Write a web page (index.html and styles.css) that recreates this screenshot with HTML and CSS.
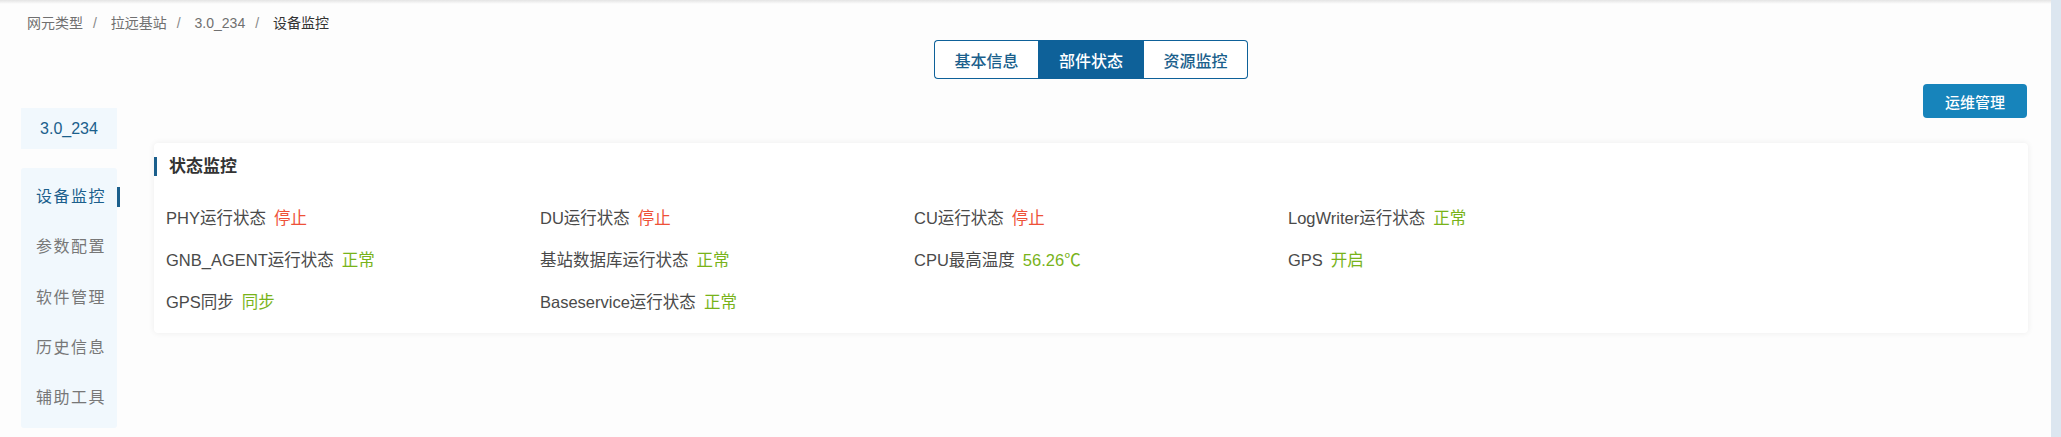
FILE: index.html
```html
<!DOCTYPE html>
<html lang="zh-CN">
<head>
  <meta charset="UTF-8">
  <title>设备监控</title>
  <link rel="stylesheet" href="styles.css">
</head>
<body>
  <div class="app">
    <div class="main">
      <div class="topline"></div>
      <div class="breadcrumb">
        <span class="crumb">网元类型</span><span class="sep">/</span>
        <span class="crumb">拉远基站</span><span class="sep">/</span>
        <span class="crumb">3.0_234</span><span class="sep">/</span>
        <span class="crumb current">设备监控</span>
      </div>

      <div class="layout">
        <div class="sidebar">
          <div class="node-name">3.0_234</div>
          <ul class="menu">
            <li class="active">设备监控</li>
            <li>参数配置</li>
            <li>软件管理</li>
            <li>历史信息</li>
            <li>辅助工具</li>
          </ul>
        </div>

        <div class="content">
          <div class="tabs">
            <button class="tab">基本信息</button>
            <button class="tab active">部件状态</button>
            <button class="tab">资源监控</button>
          </div>

          <div class="toolbar">
            <button class="btn-primary">运维管理</button>
          </div>

          <div class="card">
            <div class="card-title">状态监控</div>
            <div class="status-grid">
              <div class="item">PHY运行状态<span class="val stop">停止</span></div>
              <div class="item">DU运行状态<span class="val stop">停止</span></div>
              <div class="item">CU运行状态<span class="val stop">停止</span></div>
              <div class="item">LogWriter运行状态<span class="val ok">正常</span></div>

              <div class="item">GNB_AGENT运行状态<span class="val ok">正常</span></div>
              <div class="item">基站数据库运行状态<span class="val ok">正常</span></div>
              <div class="item">CPU最高温度<span class="val ok">56.26℃</span></div>
              <div class="item">GPS<span class="val ok">开启</span></div>

              <div class="item">GPS同步<span class="val ok">同步</span></div>
              <div class="item">Baseservice运行状态<span class="val ok">正常</span></div>
            </div>
          </div>
        </div>
      </div>
    </div>
    <div class="scrollbar"></div>
  </div>
</body>
</html>
```

FILE: styles.css
```css
:root {
  --blue: #1b5f8c;
  --blue-dark: #0e6199;
  --btn: #1784bb;
  --side-bg: #f1f8fd;
  --text: #4a4a4a;
  --muted: #777;
  --red: #ee5138;
  --green: #78b31a;
}
* {
  box-sizing: border-box;
}
body {
  margin: 0;
  font-family: "Liberation Sans", "Noto Sans CJK SC", sans-serif;
  color: var(--text);
  background: #fff;
}
.app {
  display: flex;
  height: 437px;
}
.main {
  flex: 1;
  background: #fdfdfd;
}
.scrollbar {
  width: 10px;
  background: #dce6f0;
}
.topline {
  height: 4px;
  background: linear-gradient(#e4e4e4, #fdfdfd);
}
.breadcrumb {
  height: 36px;
  padding: 9px 0 0 27px;
  font-size: 14px;
  line-height: 20px;
  color: #707070;
}
.sep {
  margin: 0 10px;
  color: #888;
}
.current {
  color: #333;
}
.layout {
  display: flex;
}
.sidebar {
  width: 96px;
  margin: 68px 0 0 21px;
}
.node-name {
  height: 41px;
  line-height: 41px;
  text-align: center;
  background: var(--side-bg);
  color: var(--blue);
  font-size: 16px;
}
.menu {
  list-style: none;
  margin: 19px 0 0;
  padding: 4px 0 6px;
  background: var(--side-bg);
  border-radius: 3px;
  height: 260px;
}
.menu li {
  position: relative;
  height: 50.3px;
  line-height: 50px;
  padding-left: 15px;
  font-size: 16px;
  letter-spacing: 1.5px;
  color: var(--muted);
}
.menu li.active {
  color: var(--blue);
}
.menu li.active::after {
  content: "";
  position: absolute;
  right: -3px;
  top: 15px;
  width: 3px;
  height: 20px;
  background: var(--blue);
}
.content {
  flex: 1;
  margin: 0 23px 0 37px;
}
.tabs {
  display: flex;
  justify-content: center;
}
.tab {
  width: 104px;
  height: 39px;
  font-family: inherit;
  font-size: 16px;
  font-weight: 500;
  color: var(--blue);
  background: #fff;
  border: 1px solid var(--blue-dark);
  border-left: none;
  border-right: none;
  padding: 0;
}
.tab:first-child {
  border-left: 1px solid var(--blue-dark);
  border-radius: 4px 0 0 4px;
}
.tab:last-child {
  border-right: 1px solid var(--blue-dark);
  border-radius: 0 4px 4px 0;
}
.tab.active {
  width: 106px;
  background: var(--blue-dark);
  color: #fff;
}
.toolbar {
  display: flex;
  justify-content: flex-end;
  margin-top: 5px;
  padding-right: 1px;
}
.btn-primary {
  width: 104px;
  height: 34px;
  border: none;
  border-radius: 4px;
  background: var(--btn);
  color: #fff;
  font-family: inherit;
  font-size: 15px;
  font-weight: 500;
}
.card {
  margin-top: 25px;
  height: 190px;
  background: #fff;
  border-radius: 4px;
  box-shadow: 0 0 6px rgba(0, 0, 0, 0.07);
  padding-top: 14px;
}
.card-title {
  height: 19px;
  line-height: 19px;
  border-left: 3px solid var(--blue);
  padding-left: 12px;
  font-size: 17px;
  font-weight: bold;
  color: #333;
}
.status-grid {
  display: grid;
  grid-template-columns: repeat(4, 374px);
  grid-auto-rows: 42px;
  margin-top: 21px;
  padding-left: 12px;
  font-size: 16.5px;
}
.item {
  line-height: 42px;
  color: var(--text);
}
.val {
  margin-left: 8px;
}
.stop {
  color: var(--red);
}
.ok {
  color: var(--green);
}
```
